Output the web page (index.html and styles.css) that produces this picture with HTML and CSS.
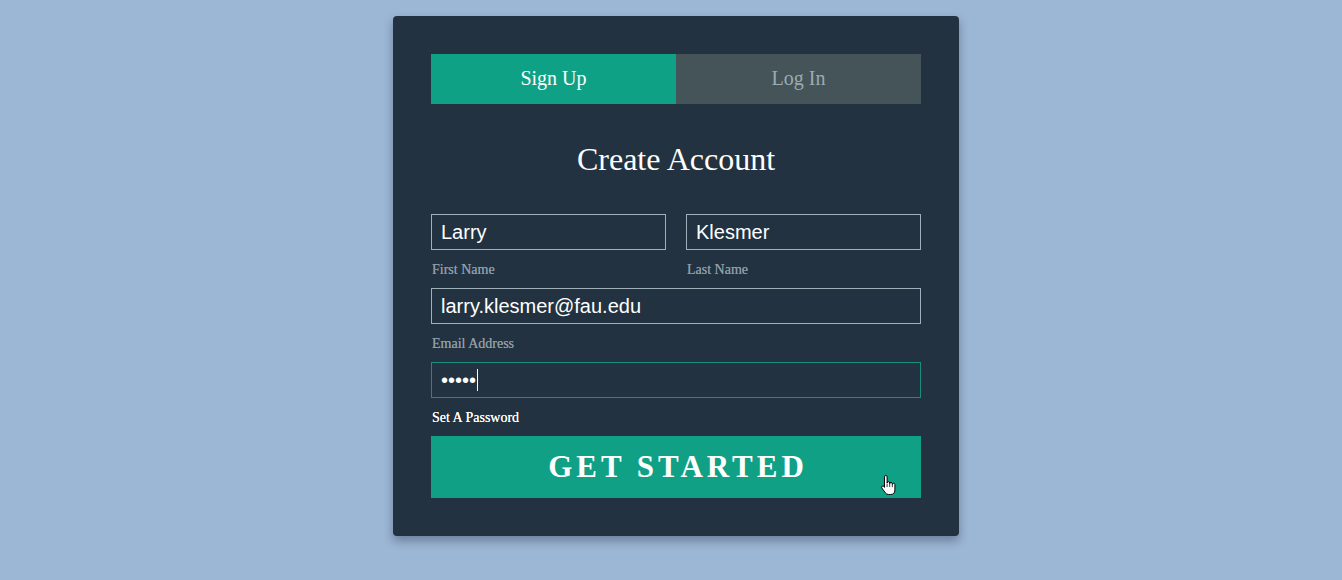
FILE: index.html
```html
<!DOCTYPE html>
<html lang="en">
<head>
<meta charset="utf-8">
<title>Create Account</title>
<link rel="stylesheet" href="styles.css">
</head>
<body>
<main class="page">
  <section class="card">
    <nav class="tabs">
      <a class="tab tab-active" href="#">Sign Up</a>
      <a class="tab" href="#">Log In</a>
    </nav>
    <h1 class="title">Create Account</h1>
    <form class="form">
      <div class="row">
        <div class="field">
          <input class="input" type="text" value="Larry">
          <label class="label">First Name</label>
        </div>
        <div class="field">
          <input class="input" type="text" value="Klesmer">
          <label class="label">Last Name</label>
        </div>
      </div>
      <div class="field">
        <input class="input" type="email" value="larry.klesmer@fau.edu">
        <label class="label">Email Address</label>
      </div>
      <div class="field">
        <div class="input input-focus"><span class="dots">•••••</span><span class="caret"></span></div>
        <label class="label label-active">Set A Password</label>
      </div>
      <button class="submit" type="button">GET STARTED
        <svg class="cursor" width="16" height="22" viewBox="0 0 16 22">
          <path d="M4.5 11V2.8a1.3 1.3 0 0 1 2.6 0V9a1.3 1.3 0 0 1 2.6 0v0.8a1.3 1.3 0 0 1 2.6 0v0.8a1.3 1.3 0 0 1 2.6 0V16q0 4.5-4.5 4.5H8.5q-2 0-3.2-1.8L1.8 14a1.3 1.3 0 0 1 2.2-1.4l0.5 0.8Z" fill="#fff" stroke="#000" stroke-width="1" stroke-linejoin="round"/>
          <path d="M9.7 10v3M12.3 10.8v2.4M7.1 9.5v3.5" stroke="#000" stroke-width="0.8"/>
        </svg>
      </button>
    </form>
  </section>
</main>
</body>
</html>
```
FILE: styles.css
```css
* { box-sizing: border-box; }
html, body { margin: 0; padding: 0; }
body {
  background: #9cb6d5;
  font-family: "Liberation Serif", "Times New Roman", serif;
  height: 580px;
  overflow: hidden;
}
.page {
  display: flex;
  justify-content: center;
  padding: 16px 0 0 10px;
}
.card {
  width: 566px;
  height: 520px;
  background: #223241;
  border-radius: 4px;
  padding: 38px 38px 38px 38px;
  box-shadow: 0 5px 10px rgba(20, 30, 50, 0.35);
  display: flex;
  flex-direction: column;
}
.tabs {
  display: grid;
  grid-template-columns: 1fr 1fr;
  height: 50px;
}
.tab {
  display: flex;
  align-items: center;
  justify-content: center;
  text-decoration: none;
  font-size: 20px;
  background: #445459;
  color: #9aacb0;
}
.tab-active {
  background: #0fa185;
  color: #ffffff;
}
.title {
  margin: 37px 0 0 0;
  height: 74px;
  font-weight: normal;
  font-size: 32px;
  line-height: 36px;
  text-align: center;
  color: #ffffff;
}
.form {
  display: flex;
  flex-direction: column;
}
.row {
  display: grid;
  grid-template-columns: 1fr 1fr;
  gap: 20px;
}
.field {
  display: flex;
  flex-direction: column;
}
.input {
  height: 36px;
  width: 100%;
  background: transparent;
  border: 1px solid #9fb0b8;
  border-radius: 0;
  padding: 0 9px;
  color: #ffffff;
  font-family: "Liberation Sans", Arial, sans-serif;
  font-size: 20px;
  outline: none;
}
.input-focus {
  border-color: #168f7c;
  display: flex;
  align-items: center;
}
.dots {
  font-size: 20px;
  line-height: 1;
}
.caret {
  display: inline-block;
  width: 1px;
  height: 22px;
  margin-left: 1px;
  background: #ffffff;
}
.label {
  margin: 11px 0 9px 1px;
  line-height: 18px;
  font-size: 14px;
  color: #8e9ca6;
  text-shadow: 0 0 0.4px currentColor;
}
.label-active {
  color: #ffffff;
}
.submit {
  position: relative;
  margin-top: 0;
  height: 62px;
  width: 100%;
  border: 0;
  background: #10a085;
  color: #ffffff;
  font-family: "Liberation Serif", "Times New Roman", serif;
  font-weight: bold;
  font-size: 31px;
  letter-spacing: 4px;
  padding: 0 0 0 4px;
  cursor: pointer;
}
.cursor {
  position: absolute;
  left: 449px;
  top: 38px;
}
```
